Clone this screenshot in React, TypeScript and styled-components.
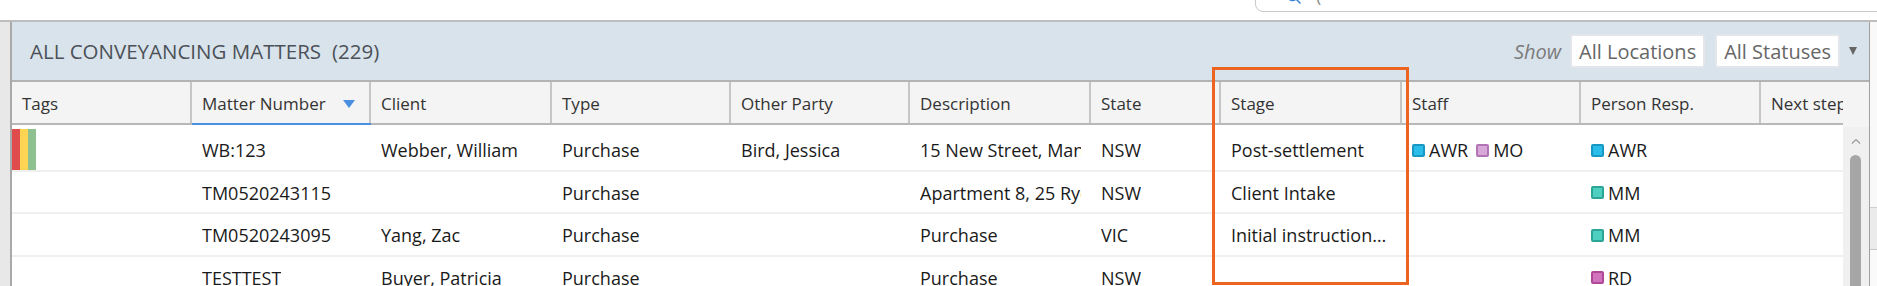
import React from 'react';
import styled, { createGlobalStyle } from 'styled-components';

const GlobalStyle = createGlobalStyle`
    html, body {
        margin: 0;
        padding: 0;
        background: #fff;
    }

    body {
        font-family: 'Open Sans', 'Noto Sans', sans-serif;
        color: #1e1e1e;
    }

    * {
        box-sizing: border-box;
    }
`;

const Page = styled.div`
    position: relative;
    width: 1877px;
    height: 286px;
    overflow: hidden;
    display: flex;
    flex-direction: column;
`;

const TopBar = styled.div`
    flex: none;
    height: 22px;
    display: flex;
    padding-left: 1255px;
    border-bottom: 2px solid #bdbdbd;
    overflow: hidden;
`;

const SearchBox = styled.div`
    flex: 1;
    height: 40px;
    margin-top: -28px;
    margin-right: -14px;
    border: 1.5px solid #c9c9c9;
    border-radius: 8px;
    display: flex;
    align-items: flex-end;
    gap: 14px;
    padding: 0 0 4px 30px;
    font-size: 18px;
    color: #8d8d8d;
`;

const Main = styled.div`
    flex: 1;
    min-height: 0;
    display: flex;
`;

const SideStrip = styled.div`
    flex: none;
    width: 12px;
    background: #e8e8e8;
    border-right: 2px solid #a9a9a9;
`;

const RightEdge = styled.div`
    flex: none;
    width: 8px;
    border-left: 1.5px solid #a0a0a0;
    background: linear-gradient(
        to bottom,
        #f9f9f9 0,
        #f9f9f9 185px,
        #cfcfcf 185px,
        #cfcfcf 186px,
        #ebebeb 186px,
        #ebebeb 227px,
        #c9c9c9 227px,
        #c9c9c9 228px,
        #fafafa 228px
    );
`;

const Panel = styled.section`
    flex: 1;
    min-width: 0;
    display: flex;
    flex-direction: column;
`;

const Band = styled.div`
    flex: none;
    height: 60px;
    display: flex;
    align-items: center;
    padding: 0 12px 0 18px;
    background: #d9e3eb;
    border-bottom: 2px solid #b3b3b3;
`;

const Title = styled.h2`
    margin: 0;
    font-size: 20.5px;
    font-weight: 400;
    color: #4b5157;
    white-space: nowrap;
`;

const Count = styled.span`
    margin-left: 11px;
`;

const Filters = styled.div`
    margin-left: auto;
    display: flex;
    align-items: center;
    gap: 10px;
`;

const ShowLabel = styled.span`
    font-size: 20px;
    font-style: italic;
    color: #7b7b7b;
    margin-right: -1px;
`;

const FilterBox = styled.button.attrs({ type: 'button' })`
    all: unset;
    height: 30px;
    display: flex;
    align-items: center;
    padding: 0 7px;
    background: #fff;
    border: 2px solid #e3e6ea;
    border-radius: 3px;
    font-family: inherit;
    font-size: 20px;
    color: #666;
    white-space: nowrap;
`;

const MenuArrow = styled.svg`
    flex: none;
    margin-left: -1px;
`;

const Grid = styled.div`
    flex: 1;
    min-height: 0;
    display: flex;
`;

const TableArea = styled.div`
    flex: 1;
    min-width: 0;
    overflow: hidden;
`;

const HeaderRow = styled.div`
    height: 43px;
    display: flex;
    background: #f4f4f4;
    border-bottom: 2px solid #b8b8b8;
`;

const HeaderCell = styled.div<{ $width: number; $sorted?: boolean }>`
    flex: none;
    width: ${(p) => p.$width}px;
    display: flex;
    align-items: center;
    padding: 2px 0 0 10px;
    border-right: 2px solid #c6c6c6;
    font-size: 17px;
    color: #333;
    white-space: nowrap;
    box-shadow: ${(p) => (p.$sorted ? '0 2px 0 #4a8fe0' : 'none')};
`;

const SortArrow = styled.svg`
    margin-left: auto;
    margin-right: 14px;
`;

const Body = styled.div`
    padding-top: 4px;
`;

const BodyRow = styled.div`
    height: 42.5px;
    display: flex;
    border-bottom: 2px solid #efefef;
`;

const Cell = styled.div<{ $width: number }>`
    flex: none;
    width: ${(p) => p.$width}px;
    display: flex;
    align-items: center;
    gap: 8px;
    padding: 2px 10px 0 10px;
    font-size: 18px;
    color: #1a1a1a;
    white-space: nowrap;
    overflow: hidden;
`;

const CellText = styled.span<{ $ellipsis?: boolean }>`
    display: block;
    min-width: 0;
    overflow: hidden;
    text-overflow: ${(p) => (p.$ellipsis ? 'ellipsis' : 'clip')};
`;

const TagCell = styled.div<{ $width: number }>`
    flex: none;
    width: ${(p) => p.$width}px;
    display: flex;
`;

const TagBar = styled.span<{ $color: string }>`
    width: 8px;
    background: ${(p) => p.$color};
`;

const Person = styled.span`
    display: flex;
    align-items: center;
    gap: 4px;
`;

const Swatch = styled.span<{ $fill: string; $edge: string }>`
    width: 13px;
    height: 13px;
    border-radius: 2px;
    background: ${(p) => p.$fill};
    border: 2px solid ${(p) => p.$edge};
`;

const ScrollColumn = styled.div`
    flex: none;
    width: 26px;
    display: flex;
    flex-direction: column;
    background: #f0f0f0;
`;

const ScrollHead = styled.div`
    height: 45px;
    background: #f4f4f4;
`;

const ScrollUp = styled.div`
    height: 28px;
    display: flex;
    align-items: center;
    justify-content: center;
`;

const ScrollThumb = styled.div`
    flex: 1;
    margin: 0 8px 0 7px;
    background: #a6a6a6;
    border-radius: 6px 6px 0 0;
`;

const Highlight = styled.div`
    position: absolute;
    left: 1212px;
    top: 67px;
    width: 197px;
    height: 218px;
    border: 3px solid #ec6420;
    pointer-events: none;
`;

type Col = { key: string; label: string; width: number; sorted?: boolean };

const columns: Col[] = [
    { key: 'tags', label: 'Tags', width: 180 },
    { key: 'matter', label: 'Matter Number', width: 179, sorted: true },
    { key: 'client', label: 'Client', width: 181 },
    { key: 'type', label: 'Type', width: 179 },
    { key: 'other', label: 'Other Party', width: 179 },
    { key: 'desc', label: 'Description', width: 181 },
    { key: 'state', label: 'State', width: 130 },
    { key: 'stage', label: 'Stage', width: 181 },
    { key: 'staff', label: 'Staff', width: 179 },
    { key: 'person', label: 'Person Resp.', width: 180 },
    { key: 'next', label: 'Next step', width: 180 },
];

const people: Record<string, [string, string]> = {
    AWR: ['#2bbde9', '#1697c4'],
    MO: ['#d7a8d8', '#b274b5'],
    MM: ['#4ecfbf', '#2aa596'],
    RD: ['#d274bc', '#b0489a'],
};

type Matter = {
    tags: string[];
    matter: string;
    client: string;
    type: string;
    other: string;
    desc: string;
    state: string;
    stage: string;
    staff: string[];
    person: string[];
};

const matters: Matter[] = [
    {
        tags: ['#e04b4b', '#fdd553', '#8fc190'],
        matter: 'WB:123',
        client: 'Webber, William',
        type: 'Purchase',
        other: 'Bird, Jessica',
        desc: '15 New Street, Manly',
        state: 'NSW',
        stage: 'Post-settlement',
        staff: ['AWR', 'MO'],
        person: ['AWR'],
    },
    {
        tags: [],
        matter: 'TM0520243115',
        client: '',
        type: 'Purchase',
        other: '',
        desc: 'Apartment 8, 25 Ryde Road',
        state: 'NSW',
        stage: 'Client Intake',
        staff: [],
        person: ['MM'],
    },
    {
        tags: [],
        matter: 'TM0520243095',
        client: 'Yang, Zac',
        type: 'Purchase',
        other: '',
        desc: 'Purchase',
        state: 'VIC',
        stage: 'Initial instructions received',
        staff: [],
        person: ['MM'],
    },
    {
        tags: [],
        matter: 'TESTTEST',
        client: 'Buyer, Patricia',
        type: 'Purchase',
        other: '',
        desc: 'Purchase',
        state: 'NSW',
        stage: '',
        staff: [],
        person: ['RD'],
    },
];

const People: React.FC<{ initials: string[] }> = ({ initials }) => (
    <>
        {initials.map((i) => (
            <Person key={i}>
                <Swatch $fill={people[i][0]} $edge={people[i][1]} />
                {i}
            </Person>
        ))}
    </>
);

const App: React.FC = () => {
    const w = (key: string) => columns.find((c) => c.key === key)!.width;

    return (
        <Page>
            <GlobalStyle />
            <TopBar>
                <SearchBox>
                    <svg width="16" height="16" viewBox="0 0 16 16" style={{ marginBottom: 2 }}>
                        <circle cx="6.5" cy="6.5" r="5" fill="none" stroke="#3b82d6" strokeWidth="1.5" />
                        <line x1="10.2" y1="10.2" x2="14.5" y2="14.5" stroke="#3b82d6" strokeWidth="1.5" />
                    </svg>
                    <span>(</span>
                </SearchBox>
            </TopBar>
            <Main>
                <SideStrip />
                <Panel>
                    <Band>
                        <Title>
                            ALL CONVEYANCING MATTERS<Count>(229)</Count>
                        </Title>
                        <Filters>
                            <ShowLabel>Show</ShowLabel>
                            <FilterBox>All Locations</FilterBox>
                            <FilterBox>All Statuses</FilterBox>
                            <MenuArrow width="8" height="8" viewBox="0 0 8 8">
                                <path d="M0 0h8L4 8z" fill="#666" />
                            </MenuArrow>
                        </Filters>
                    </Band>
                    <Grid>
                        <TableArea>
                            <HeaderRow>
                                {columns.map((c) => (
                                    <HeaderCell key={c.key} $width={c.width} $sorted={c.sorted}>
                                        {c.label}
                                        {c.sorted && (
                                            <SortArrow width="12" height="8" viewBox="0 0 12 8">
                                                <path d="M0 0h12L6 8z" fill="#4a8fe0" />
                                            </SortArrow>
                                        )}
                                    </HeaderCell>
                                ))}
                            </HeaderRow>
                            <Body>
                                {matters.map((m) => (
                                    <BodyRow key={m.matter}>
                                        <TagCell $width={w('tags')}>
                                            {m.tags.map((t) => (
                                                <TagBar key={t} $color={t} />
                                            ))}
                                        </TagCell>
                                        <Cell $width={w('matter')}>
                                            <CellText>{m.matter}</CellText>
                                        </Cell>
                                        <Cell $width={w('client')}>
                                            <CellText>{m.client}</CellText>
                                        </Cell>
                                        <Cell $width={w('type')}>
                                            <CellText>{m.type}</CellText>
                                        </Cell>
                                        <Cell $width={w('other')}>
                                            <CellText>{m.other}</CellText>
                                        </Cell>
                                        <Cell $width={w('desc')}>
                                            <CellText>{m.desc}</CellText>
                                        </Cell>
                                        <Cell $width={w('state')}>
                                            <CellText>{m.state}</CellText>
                                        </Cell>
                                        <Cell $width={w('stage')}>
                                            <CellText $ellipsis>{m.stage}</CellText>
                                        </Cell>
                                        <Cell $width={w('staff')}>
                                            <People initials={m.staff} />
                                        </Cell>
                                        <Cell $width={w('person')}>
                                            <People initials={m.person} />
                                        </Cell>
                                        <Cell $width={w('next')} />
                                    </BodyRow>
                                ))}
                            </Body>
                        </TableArea>
                        <ScrollColumn>
                            <ScrollHead />
                            <ScrollUp>
                                <svg width="10" height="6" viewBox="0 0 10 6">
                                    <path d="M1 5.5 5 1.5l4 4" fill="none" stroke="#9a9a9a" strokeWidth="1.2" />
                                </svg>
                            </ScrollUp>
                            <ScrollThumb />
                        </ScrollColumn>
                    </Grid>
                </Panel>
                <RightEdge />
            </Main>
            <Highlight />
        </Page>
    );
};

export default App;
